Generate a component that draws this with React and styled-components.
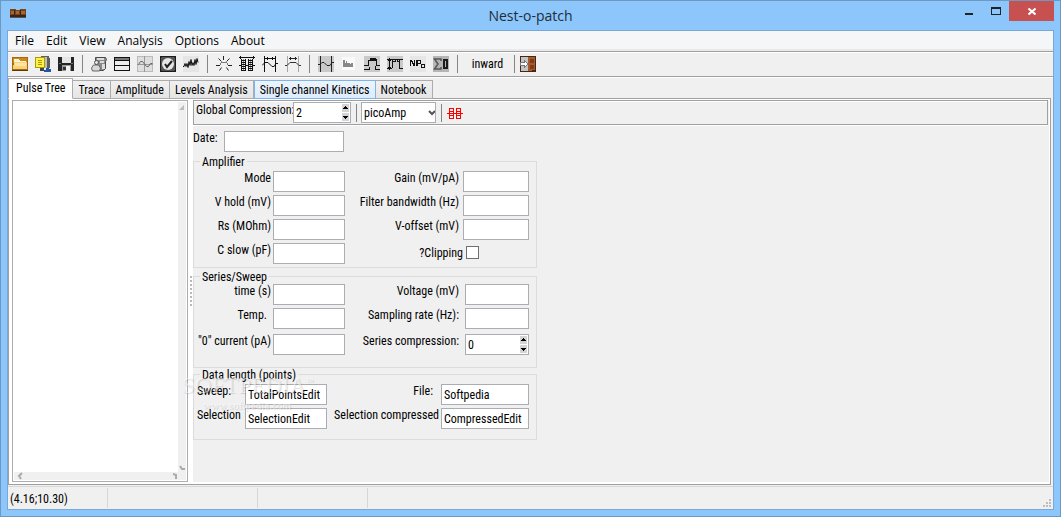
import React from "react";
import styled, { createGlobalStyle, css } from "styled-components";

const Global = createGlobalStyle`
  *, *::before, *::after { box-sizing: border-box; }
  body { margin: 0; background: #8cc6fa; }
  button, input, select { font: inherit; color: inherit; margin: 0; border-radius: 0; }
`;

const uiFont = `"Open Sans", "Noto Sans", sans-serif`;
const formFont = `"Roboto Condensed", Roboto, sans-serif`;

const Window = styled.div`
  display: flex;
  flex-direction: column;
  min-height: 100vh;
  padding: 0 6px 6px;
  border: 1px solid #6c98c4;
  background: #8cc6fa;
  color: #000;
  font: 12px/14px ${formFont};
`;

const TitleBar = styled.header`
  display: grid;
  grid-template-columns: 1fr auto 1fr;
  height: 29px;
`;

const AppIcon = styled.svg`
  width: 16px;
  height: 11px;
  margin: 7px 0 0 3px;
`;

const Title = styled.h1`
  margin: 0;
  font: 400 14px/29px ${uiFont};
  color: #1e2d3a;
`;

const WindowButtons = styled.div`
  display: flex;
  justify-content: flex-end;
`;

const WindowButton = styled.button`
  display: flex;
  justify-content: center;
  width: ${(p) => (p.$close ? 45 : 27)}px;
  height: 20px;
  padding: 0;
  border: 0;
  background: ${(p) => (p.$close ? "#c75050" : "transparent")};
`;

const Client = styled.div`
  flex: 1;
  display: flex;
  flex-direction: column;
  border: 1px solid #78a9d6;
  background: #f0f0f0;
`;

const MenuBar = styled.nav`
  display: flex;
  height: 20px;
  padding-left: 1px;
  border-bottom: 2px solid #e9e9e9;
  background: #f5f6f7;
  font: 12px/18px ${uiFont};
`;

const MenuItem = styled.button`
  padding: 1px 6px 0;
  border: 0;
  background: transparent;
`;

const Toolbar = styled.div`
  display: flex;
  align-items: center;
  height: 26px;
  margin-bottom: 1px;
  border: solid #a0a0a0;
  border-width: 1px 0;
  box-shadow: inset 0 1px #fff, 0 1px #fff;
`;

const IconButton = styled.button`
  display: flex;
  width: 23px;
  height: 22px;
  padding: ${(p) => (p.$tight ? "3px 6px 3px 1px" : "3px 3px 3px 4px")};
  border: 0;
  background: transparent;
`;

const TextButton = styled.button`
  width: 47px;
  height: 22px;
  padding: 0 0 0 4px;
  border: 0;
  background: transparent;
`;

const Separator = styled.span`
  width: 1px;
  height: 18px;
  margin: 0 4px 0 5px;
  background: #848484;
`;

const Tabs = styled.div`
  display: flex;
  align-items: flex-end;
  height: 20px;
  position: relative;
`;

const Tab = styled.button`
  height: 19px;
  margin-bottom: -1px;
  padding: 0 5px;
  border: 1px solid #acacac;
  border-left-width: 0;
  background: linear-gradient(#f0f0f0, #e5e5e5);
  white-space: nowrap;
  ${(p) =>
    p.$selected &&
    css`
      height: 21px;
      padding: 0 7px 2px;
      border-left-width: 1px;
      border-bottom-color: #fff;
      background: #fff;
    `}
  ${(p) =>
    p.$hot &&
    css`
      border-color: #7eb4ea;
      border-left-width: 1px;
      background: linear-gradient(#ecf4fc, #dcecfc);
    `}
`;

const Page = styled.main`
  flex: 1;
  display: flex;
  margin: 0 2px 1px 0;
  padding: 1px 1px 2px 3px;
  border: 1px solid #a0a0a0;
  background: #fff;
`;

const Tree = styled.section`
  display: grid;
  grid-template-columns: 1fr 8px;
  grid-template-rows: 1fr 8px;
  width: 176px;
  padding: 1px;
  border: 1px solid #abadb3;
`;

const VerticalBar = styled.div`
  display: flex;
  flex-direction: column;
  justify-content: space-between;
  background: #f0f0f0;
`;

const HorizontalBar = styled.div`
  display: flex;
  justify-content: space-between;
  grid-column: 1 / -1;
  padding: 0 5px 0 3px;
  background: #f0f0f0;
`;

const Splitter = styled.div`
  display: flex;
  align-items: center;
  justify-content: center;
  width: 5px;
`;

const Content = styled.section`
  flex: 1;
  background: #f0f0f0;
`;

const CompressionBar = styled.div`
  display: flex;
  align-items: center;
  height: 25px;
  margin-right: 1px;
  padding-left: 2px;
  border: 1px solid #a0a0a0;
  box-shadow: inset 0 1px #fff, 0 1px #fff;
`;

const BarLabel = styled.label`
  width: 97px;
  padding-bottom: 6px;
  white-space: nowrap;
`;

const TextInput = styled.input`
  display: block;
  width: 100%;
  min-width: 0;
  height: 21px;
  padding: 0 2px;
  border: 1px solid #abadb3;
  background: #fff;
`;

const SpinBox = styled.span`
  display: flex;
  width: ${(p) => (p.$width ? p.$width + "px" : "100%")};
  height: 21px;
  padding-right: 1px;
  border: 1px solid #abadb3;
  background: #fff;
`;

const SpinInput = styled.input`
  flex: 1;
  min-width: 0;
  padding: 0 2px;
  border: 0;
  background: transparent;
`;

const SpinButtons = styled.span`
  display: flex;
  flex-direction: column;
  justify-content: center;
  gap: 1px;
  width: 7px;
`;

const SpinButton = styled.button`
  display: flex;
  width: 7px;
  height: 8px;
  padding: 0;
  border: 0;
  background: #d4d4d4;
`;

const UnitSelect = styled.span`
  display: grid;
  align-items: center;
  width: 75px;
  height: 21px;
  border: 1px solid #abadb3;
  background: #fff;
  select, svg { grid-area: 1 / 1; }
  svg { justify-self: end; pointer-events: none; }
`;

const Select = styled.select`
  width: 100%;
  height: 19px;
  padding: 0 2px;
  border: 0;
  appearance: none;
  background: transparent;
`;

const DateRow = styled.div`
  display: grid;
  grid-template-columns: 31px 120px;
  padding-top: 6px;
`;

const Group = styled.fieldset`
  position: relative;
  max-width: 344px;
  min-width: 0;
  margin: ${(p) => p.$gap}px 0 0;
  padding: ${(p) => p.$top ?? 3}px 7px ${(p) => p.$bottom}px 0;
  border: 1px solid #dcdcdc;
`;

const Legend = styled.legend`
  height: 13px;
  margin-left: 6px;
  padding: 0 2px;
  line-height: 14px;
`;

const Row = styled.div`
  display: grid;
  grid-template-columns: ${(p) => p.$columns};
  margin-bottom: ${(p) => p.$gap ?? 3}px;
`;

const Label = styled.label`
  padding: 0 ${(p) => p.$inset ?? 2}px 0 3px;
  text-align: ${(p) => (p.$start ? "left" : "right")};
  white-space: nowrap;
`;

const TightLabel = styled(Label)`
  padding-left: 0;
`;

const CheckBox = styled.input`
  appearance: none;
  width: 13px;
  height: 13px;
  margin: 3px 0 0 3px;
  border: 1px solid #707070;
  background: #fff;
`;

const CheckLabel = styled(Label)`
  padding-top: 3px;
`;

const Watermark = styled.div`
  position: absolute;
  top: -7px;
  left: -12px;
  color: rgba(255, 255, 255, 0.55);
  font: 23px/23px "Liberation Serif", serif;
  text-shadow: 1px 1px 1px rgba(0, 0, 0, 0.14);
  pointer-events: none;
`;

const WatermarkMark = styled.sup`
  font-size: 8px;
  line-height: 0;
`;

const WatermarkSite = styled.div`
  padding-left: 21px;
  font-size: 11px;
  line-height: 16px;
`;

const StatusBar = styled.footer`
  display: flex;
  height: 23px;
  border-top: 1px solid #d7d7d7;
`;

const StatusPanel = styled.span`
  width: ${(p) => p.$width}px;
  height: 20px;
  margin-top: 1px;
  padding: 4px 2px;
  border-right: 1px solid #d7d7d7;
`;

const Grip = styled.svg`
  margin: 12px 2px 0 auto;
`;

const Icon = ({ children }) => (
  <svg width="16" height="16" viewBox="0 0 16 16" shapeRendering="crispEdges" fill="none" aria-hidden="true">
    {children}
  </svg>
);

const icons = {
  open: (
    <Icon>
      <path fill="#a86a10" d="M0 1h16v14H0z" />
      <path fill="#c98a1c" d="M1 2h14v5H1z" />
      <path fill="#fff3cf" d="M2 3h5l1 2h6v2H2z" />
      <path fill="#f7d37c" d="M2 6h13v7H1z" />
      <path fill="#fbe6a8" d="M3 7h11v3H3z" />
      <path fill="#5d3a06" d="M0 14h16v1H0z" />
    </Icon>
  ),
  archive: (
    <Icon>
      <path fill="#5e5e5e" d="M6 0h8v2h1v10H9V3H6z" />
      <path fill="#bdbdbd" d="M10 1h2v11h-2z" />
      <path fill="#a89c00" d="M0 1h10v11H0z" />
      <path fill="#fff04a" d="M1 2h8v9H1z" />
      <path stroke="#a89c00" d="M3 4.500h4M3 6.500h4M3 8.500h4" />
      <path fill="#444" d="M5 12h4v3H5z" />
      <path fill="#2155aa" d="M11 12h3v1h2v3H9v-2h2z" />
    </Icon>
  ),
  save: (
    <Icon>
      <path fill="#252525" d="M0 1h15l1 1v13H0z" />
      <path fill="#e4e4e4" d="M4 1h9v6H4z" />
      <path fill="#777" d="M1 7h2v1H1zM13 7h2v1h-2z" />
      <path fill="#9a9a9a" d="M4 9h9v6H4z" />
      <path fill="#f2f2f2" d="M8 10h4v5H8z" />
      <path fill="#333" d="M5 11h3v3H5z" />
    </Icon>
  ),
  scroll: (
    <Icon>
      <g shapeRendering="auto">
        <path fill="#8a8a8a" stroke="#4a4a4a" d="M4.500 1.500h10l1 2-1 2v7l-2 2h-7l-1-5z" />
        <path fill="#dcdcdc" d="M6 2h7v2H6zM9 5h4v2H9zM11 8h3v5h-3z" />
        <circle cx="5.500" cy="6.500" r="2" fill="#e4e4e4" stroke="#555" />
        <path fill="#d8d8d8" stroke="#666" d="M1.500 15l-1-3 2-3h5l2 3-1 3z" />
      </g>
    </Icon>
  ),
  table: (
    <Icon>
      <path fill="#111" d="M0 1h16v14H0z" />
      <path fill="#777" d="M1 2h14v2H1z" />
      <path fill="#eee" d="M1 5h14v4H1zM1 10h14v4H1z" />
    </Icon>
  ),
  sine: (
    <Icon>
      <path fill="#dedede" stroke="#bbb" d="M.5.5h15v15H.5z" />
      <path stroke="#999" d="M7.500 0v16M0 8.500h16" />
      <path stroke="#666" shapeRendering="auto" d="M1.500 8.500l2-3h2l4 5h2l2-3h2" />
    </Icon>
  ),
  check: (
    <Icon>
      <path fill="#1d1d1d" d="M0 0h16v16H0z" />
      <g shapeRendering="auto">
        <path fill="#555" d="M2 1h12l1 1v12l-1 1H2l-1-1V2z" />
        <circle cx="8" cy="8" r="6" fill="#e6e6e6" />
        <path stroke="#222" strokeWidth="2" d="M5 8l2 3 5-6" />
      </g>
    </Icon>
  ),
  noise: (
    <Icon>
      <path fill="#e5e5e5" d="M0 0h16v16H0z" />
      <path stroke="#111" shapeRendering="auto" d="M0 10.500h1l1-3 1 3 1-3 1 4 1-6 1 4 1-6 1 6 1-3 1 3 1-6 1 5 1-6 1 4" />
    </Icon>
  ),
  burst: (
    <Icon>
      <path stroke="#222" d="M0 9.500h4M12 9.500h4M7.500 0v4" />
      <path stroke="#222" shapeRendering="auto" d="M2.500 2.500l3 3M13.500 2.500l-3 3M3.500 14.500l2-3M12.500 14.500l-2-3" />
      <path stroke="#777" d="M5 6.500h6M4.500 7v2M11.500 7v2" />
    </Icon>
  ),
  columns: (
    <Icon>
      <path stroke="#111" d="M0 1.500h16M1.500 0v3M14.500 0v3M2.500 3v12M6.500 3v12M9.500 3v12M13.500 3v12M2 4.500h5M2 6.500h5M2 8.500h5M2 10.500h5M2 12.500h5M2 14.500h5M9 4.500h5M9 6.500h5M9 8.500h5M9 10.500h5M9 12.500h5M9 14.500h5M0 9.500h2M7 9.500h2M14 9.500h2" />
      <path stroke="#111" d="M4.500 3v12M11.500 3v12" strokeOpacity=".4" />
    </Icon>
  ),
  rangeWave: (
    <Icon>
      <path stroke="#111" d="M2.500 0v16M13.500 0v16M3 2.500h10M5.500 1v3M10.500 1v3" />
      <path stroke="#111" shapeRendering="auto" d="M0 9.500l3-3h3l4 4h2l2-3h2" />
    </Icon>
  ),
  rangePeak: (
    <Icon>
      <path stroke="#a5a5a5" d="M2.500 0v16M13.500 0v16" />
      <path stroke="#222" d="M4 2.500h8M5.500 1v3M10.500 1v3" />
      <path stroke="#333" shapeRendering="auto" d="M0 9.500h2l3-3h6l3 3h2" />
    </Icon>
  ),
  sinePanel: (
    <Icon>
      <path fill="#c9c9c9" d="M0 0h16v16H0z" />
      <path stroke="#222" d="M2.500 0v16M13.500 0v16" />
      <path stroke="#222" shapeRendering="auto" d="M0 8.500h2l2-2h2l3 3h3l2-3h2" />
    </Icon>
  ),
  histogram: (
    <Icon>
      <path fill="#fafafa" d="M1 1h13v13H1z" />
      <path fill="#888" d="M2 4h2v3h1V5h1v2h3v1h1V7h2v4H2z" />
    </Icon>
  ),
  pulse: (
    <Icon>
      <path fill="#c9c9c9" d="M0 0h16v16H0z" />
      <path stroke="#111" d="M0 9.500h4v-6M12.500 3v6.500H16M4 4.500h2v-2h1v2h1v-2h1v2h1v-2h1v2h2M0 13.500h5v-3M11.500 10v3.500H16" />
    </Icon>
  ),
  pulseRange: (
    <Icon>
      <path fill="#c9c9c9" d="M0 0h16v16H0z" />
      <path stroke="#111" d="M0 3.500h16M0 12.500h5M2.500 2v12M5.500 12V4M12.500 4v8M5 5.500h3v-2M10.500 3v2.500h2M1 4.500h3M1 11.500h3M12 12.500h4" />
    </Icon>
  ),
  npo: (
    <Icon>
      <path fill="#e6e6e6" d="M0 0h16v16H0z" />
      <path stroke="#111" d="M.5 10V4M1.500 4v2M2.500 5v3M3.500 7v3M4.500 4v6M6.500 4v6M7 4.500h3v3H7M12 8.500h2v3h-3v-3h1" />
      <path stroke="#111" d="M7.500 4v6" />
    </Icon>
  ),
  sum: (
    <Icon>
      <path fill="#b5b5b5" d="M0 0h16v16H0z" />
      <path stroke="#555" shapeRendering="auto" strokeWidth="1.500" d="M8 5V3H1.500l3.500 5-3.500 5H8v-2" />
      <path stroke="#1b1b1b" strokeWidth="2" d="M11 4h3v8h-3z" />
    </Icon>
  ),
  exit: (
    <Icon>
      <path fill="#4c2412" d="M0 0h16v16H0z" />
      <path fill="#c4c4c4" d="M1 1h8v14H1z" />
      <path fill="#a55a30" d="M8 1h7v13l-7 1z" />
      <path fill="#7e3c1c" d="M10 3h4v4h-4zM10 9h4v4h-4z" />
      <path fill="#fff" stroke="#777" d="M.5 6.500H4V4l4 4-4 4V9.500H.5z" />
    </Icon>
  ),
};

const toolGroups = [
  ["open", "archive", "save"],
  ["scroll", "table", "sine", "check", "noise"],
  ["burst", "columns", "rangeWave", "rangePeak"],
  ["sinePanel", "histogram", "pulse", "pulseRange", "npo", "sum"],
];

const tabs = ["Pulse Tree", "Trace", "Amplitude", "Levels Analysis", "Single channel Kinetics", "Notebook"];

function Spin({ id, value, width }) {
  return (
    <SpinBox $width={width}>
      <SpinInput id={id} defaultValue={value} />
      <SpinButtons>
        <SpinButton aria-label="Increase">
          <svg width="7" height="8" shapeRendering="crispEdges">
            <path fill="#000" d="M3 2h1v1h1v1h1v1H1V4h1V3h1z" />
          </svg>
        </SpinButton>
        <SpinButton aria-label="Decrease">
          <svg width="7" height="8" shapeRendering="crispEdges">
            <path fill="#000" d="M1 3h5v1H5v1H4v1H3V5H2V4H1z" />
          </svg>
        </SpinButton>
      </SpinButtons>
    </SpinBox>
  );
}

const ampColumns = "79px 72px 1fr 66px";
const seriesColumns = "79px 72px 1fr 64px";
const dataColumns = "51px 82px 1fr 88px";

export default function App() {
  return (
    <>
      <Global />
      <Window>
        <TitleBar>
          <AppIcon viewBox="0 0 16 11" shapeRendering="crispEdges" aria-hidden="true">
            <path fill="#7a4317" d="M0 1h6v1h4V1h6v7H0z" />
            <path fill="#a8642a" d="M1 3h3v3H1zM6 3h3v3H6zM11 3h4v3h-4z" />
            <path fill="#3a2318" d="M0 7h16v2H0zM4 2h1v5H4zM10 2h1v5h-1z" />
            <path fill="#555" d="M0 9h16v1H0z" />
          </AppIcon>
          <Title>Nest-o-patch</Title>
          <WindowButtons>
            <WindowButton aria-label="Minimize">
              <svg width="8" height="16" shapeRendering="crispEdges"><path fill="#222" d="M0 12h8v2H0z" /></svg>
            </WindowButton>
            <WindowButton aria-label="Maximize">
              <svg width="10" height="16" shapeRendering="crispEdges">
                <path fill="#222" fillRule="evenodd" d="M0 6h10v8H0zM1 8v5h8V8z" />
              </svg>
            </WindowButton>
            <WindowButton $close aria-label="Close">
              <svg width="8" height="20" viewBox="0 0 8 20"><path stroke="#fff" strokeWidth="2" d="M.5 7.500l7 6M7.500 7.500l-7 6" /></svg>
            </WindowButton>
          </WindowButtons>
        </TitleBar>

        <Client>
          <MenuBar>
            {["File", "Edit", "View", "Analysis", "Options", "About"].map((m) => (
              <MenuItem key={m}>{m}</MenuItem>
            ))}
          </MenuBar>

          <Toolbar>
            {toolGroups.map((group) => (
              <React.Fragment key={group[0]}>
                {group.map((name) => (
                  <IconButton key={name} aria-label={name}>{icons[name]}</IconButton>
                ))}
                <Separator />
              </React.Fragment>
            ))}
            <TextButton>inward</TextButton>
            <Separator />
            <IconButton $tight aria-label="exit">{icons.exit}</IconButton>
          </Toolbar>

          <Tabs role="tablist">
            {tabs.map((t, i) => (
              <Tab key={t} role="tab" aria-selected={i === 0} $selected={i === 0} $hot={i === 4}>{t}</Tab>
            ))}
          </Tabs>

          <Page>
            <Tree aria-label="Pulse tree">
              <div />
              <VerticalBar>
                <svg width="8" height="10"><path fill="#bbb" d="M1 8l5-5v5z" /></svg>
                <svg width="8" height="10"><path stroke="#aaa" strokeWidth="2" fill="none" d="M2 4l2 3h3" /></svg>
              </VerticalBar>
              <HorizontalBar>
                <svg width="8" height="8"><path stroke="#aaa" strokeWidth="2" fill="none" d="M5 1L2 4l2 3" /></svg>
                <svg width="8" height="8"><path stroke="#aaa" strokeWidth="2" fill="none" d="M0 2l3 1v4" /></svg>
              </HorizontalBar>
            </Tree>
            <Splitter>
              <svg width="3" height="30" shapeRendering="crispEdges">
                <path stroke="#b8b8b8" strokeWidth="2" strokeDasharray="2 2" d="M2 0v30" />
              </svg>
            </Splitter>

            <Content>
              <CompressionBar>
                <BarLabel htmlFor="global">Global Compression:</BarLabel>
                <Spin id="global" value="2" width={58} />
                <Separator />
                <UnitSelect>
                  <Select aria-label="Unit" defaultValue="picoAmp">
                    <option>picoAmp</option>
                    <option>nanoAmp</option>
                  </Select>
                  <svg width="7" height="8"><path stroke="#555" strokeWidth="2" fill="none" d="M1 2l3 3 3-3" /></svg>
                </UnitSelect>
                <Separator />
                <IconButton $tight aria-label="Compress">
                  <svg width="16" height="16" viewBox="0 0 16 16" shapeRendering="crispEdges" fill="none">
                    <path stroke="#f00" d="M0 8.500h2M15 8.500h1M2.500 3v11M6.500 3v11M9.500 3v11M13.500 3v11M2 3.500h5M2 6.500h5M2 8.500h5M2 10.500h5M2 13.500h5M9 3.500h5M9 6.500h5M9 8.500h7M9 10.500h5M9 13.500h5M7 8.500h2" />
                  </svg>
                </IconButton>
              </CompressionBar>

              <DateRow>
                <label htmlFor="date">Date:</label>
                <TextInput id="date" />
              </DateRow>

              <Group $gap={3} $bottom={0}>
                <Legend>Amplifier</Legend>
                <Row $columns={ampColumns}>
                  <Label htmlFor="mode">Mode</Label>
                  <TextInput id="mode" />
                  <Label $inset={4} htmlFor="gain">Gain (mV/pA)</Label>
                  <TextInput id="gain" />
                </Row>
                <Row $columns={ampColumns}>
                  <Label htmlFor="vhold">V hold (mV)</Label>
                  <TextInput id="vhold" />
                  <Label $inset={4} htmlFor="filter">Filter bandwidth (Hz)</Label>
                  <TextInput id="filter" />
                </Row>
                <Row $columns={ampColumns}>
                  <Label htmlFor="rs">Rs (MOhm)</Label>
                  <TextInput id="rs" />
                  <Label $inset={4} htmlFor="voffset">V-offset (mV)</Label>
                  <TextInput id="voffset" />
                </Row>
                <Row $columns={ampColumns}>
                  <Label htmlFor="cslow">C slow (pF)</Label>
                  <TextInput id="cslow" />
                  <CheckLabel $inset={0} htmlFor="clipping">?Clipping</CheckLabel>
                  <CheckBox id="clipping" type="checkbox" />
                </Row>
              </Group>

              <Group $gap={2} $top={1} $bottom={9}>
                <Legend>Series/Sweep</Legend>
                <Row $columns={seriesColumns}>
                  <Label htmlFor="time">time (s)</Label>
                  <TextInput id="time" />
                  <Label $inset={6} htmlFor="voltage">Voltage (mV)</Label>
                  <TextInput id="voltage" />
                </Row>
                <Row $columns={seriesColumns} $gap={5}>
                  <Label $inset={6} htmlFor="temp">Temp.</Label>
                  <TextInput id="temp" />
                  <Label $inset={6} htmlFor="rate">Sampling rate (Hz):</Label>
                  <TextInput id="rate" />
                </Row>
                <Row $columns={seriesColumns}>
                  <TightLabel htmlFor="zero">"0" current (pA)</TightLabel>
                  <TextInput id="zero" />
                  <Label $inset={6} htmlFor="series">Series compression:</Label>
                  <Spin id="series" value="0" />
                </Row>
              </Group>

              <Group $gap={0} $bottom={7}>
                <Legend>Data length (points)</Legend>
                <Row $columns={dataColumns}>
                  <Label $start htmlFor="sweep">Sweep:</Label>
                  <TextInput id="sweep" defaultValue="TotalPointsEdit" />
                  <Label $inset={8} htmlFor="file">File:</Label>
                  <TextInput id="file" defaultValue="Softpedia" />
                </Row>
                <Row $columns={dataColumns}>
                  <Label $start htmlFor="selection">Selection</Label>
                  <TextInput id="selection" defaultValue="SelectionEdit" />
                  <Label htmlFor="compressed">Selection compressed</Label>
                  <TextInput id="compressed" defaultValue="CompressedEdit" />
                </Row>
                <Watermark>
                  SOFTPEDIA<WatermarkMark>™</WatermarkMark>
                  <WatermarkSite>www.softpedia.com</WatermarkSite>
                </Watermark>
              </Group>
            </Content>
          </Page>

          <StatusBar>
            <StatusPanel $width={100}>(4.16;10.30)</StatusPanel>
            <StatusPanel $width={150} />
            <StatusPanel $width={110} />
            <Grip width="8" height="8" shapeRendering="crispEdges">
              <path fill="#bdbdbd" d="M6 0h2v2H6zM3 3h2v2H3zM6 3h2v2H6zM0 6h2v2H0zM3 6h2v2H3zM6 6h2v2H6z" />
            </Grip>
          </StatusBar>
        </Client>
      </Window>
    </>
  );
}
